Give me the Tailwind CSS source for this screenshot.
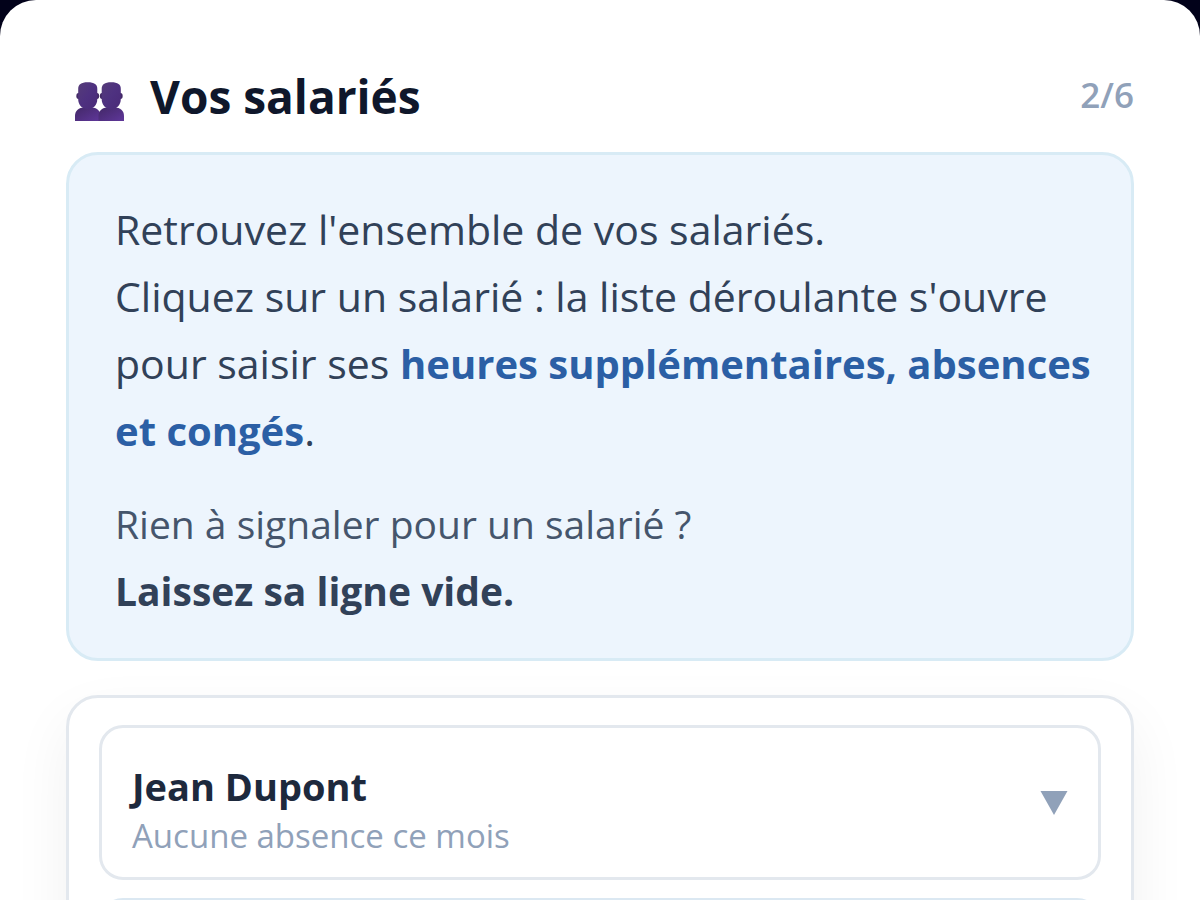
<!DOCTYPE html>
<html lang="fr">

<head>
    <meta charset="UTF-8" />
    <meta name="viewport" content="width=device-width, initial-scale=1.0" />
    <title>Vos salariés</title>
    <script src="https://cdn.jsdelivr.net/npm/@tailwindcss/browser@4"></script>
</head>

<body class="bg-[#02021a] font-['Open_Sans','Noto_Sans',sans-serif]">
    <main class="h-screen overflow-hidden rounded-t-[36px] bg-white px-[66px] pt-16">
        <header class="flex h-16 items-center justify-between pl-2">
            <div class="flex items-center gap-6">
                <svg class="mt-3 h-10 w-[52px]" viewBox="0 0 52 40" aria-hidden="true">
                    <defs>
                        <linearGradient id="head" x1="0" y1="0" x2="1" y2="1">
                            <stop offset="0" stop-color="#553c78" />
                            <stop offset="0.5" stop-color="#4e3180" />
                            <stop offset="1" stop-color="#4a2a78" />
                        </linearGradient>
                        <linearGradient id="body" x1="0" y1="0" x2="1" y2="1">
                            <stop offset="0" stop-color="#432868" />
                            <stop offset="1" stop-color="#5f379a" />
                        </linearGradient>
                        <g id="person">
                            <path d="M0 39V34C0 28.500 4 25.500 9 25.500H16.500C21.500 25.500 25.500 28.500 25.500 34V39Z" fill="url(#body)" />
                            <ellipse cx="3.500" cy="14" rx="2.200" ry="3" fill="#432a66" />
                            <ellipse cx="22" cy="14" rx="2.200" ry="3" fill="#432a66" />
                            <path d="M3.200 7C3.200 2.500 6 0.300 12.700 0.300S22.300 2.500 22.300 7V17C22.300 23 18.500 27 12.700 27S3.200 23 3.200 17Z" fill="url(#head)" />
                        </g>
                    </defs>
                    <use href="#person" x="1" />
                    <use href="#person" x="24.500" />
                </svg>
                <h1 class="text-[46px] font-bold leading-none text-slate-900">Vos salariés</h1>
            </div>
            <span class="pb-1 text-[35px] font-semibold leading-none text-slate-400">2/6</span>
        </header>

        <section class="mt-6 rounded-[32px] border-3 border-[#d8ebf5] bg-[#edf5fd] pt-[41px] pr-9 pb-[34px] pl-[46px]">
            <p class="text-[41px] leading-[67px] text-slate-700">
                Retrouvez l'ensemble de vos salariés.<br />
                Cliquez sur un salarié : la liste déroulante s'ouvre<br />
                pour saisir ses <strong class="text-[40px] font-bold text-[#2b5fa5]">heures supplémentaires, absences<br />
                et congés</strong>.
            </p>
            <p class="mt-[26px] text-[39px] leading-[67px] text-slate-600">
                Rien à signaler pour un salarié ?<br />
                <strong class="font-bold text-slate-700">Laissez sa ligne vide.</strong>
            </p>
        </section>

        <section class="mt-[34px] flex flex-col gap-[18px] rounded-[32px] border-3 border-[#e3e8ee] bg-white px-[30px] pt-[27px] pb-16 shadow-[0_24px_60px_rgba(0,0,0,0.06)]">
            <button type="button" class="flex items-center justify-between rounded-3xl border-3 border-[#e3e8ee] px-[30px] pt-[33px] pb-[17px] text-left">
                <span class="flex flex-col">
                    <span class="text-[38px] font-bold leading-[50px] text-slate-800">Jean Dupont</span>
                    <span class="text-[33px] leading-[49px] text-slate-400">Aucune absence ce mois</span>
                </span>
                <svg class="mb-[15px] h-6 w-7 text-slate-400" viewBox="0 0 28 24" fill="currentColor" aria-hidden="true">
                    <path d="M0.500 0H27.500L14 24Z" />
                </svg>
            </button>
            <div class="h-32 rounded-3xl border-3 border-[#dbe8f2]"></div>
        </section>
    </main>
</body>

</html>
